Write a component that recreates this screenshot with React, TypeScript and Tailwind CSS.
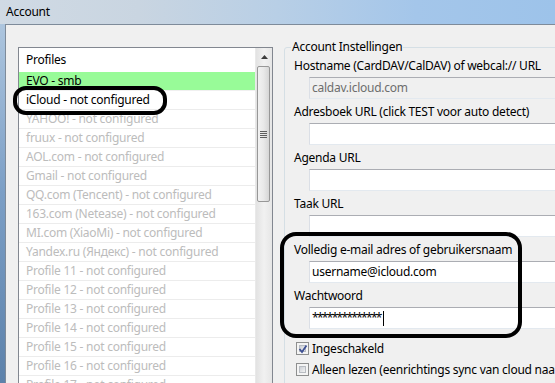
import React from "react";

const items: { t: string; c: "green" | "black" | "gray" }[] = [
  { t: "EVO - smb", c: "green" },
  { t: "iCloud - not configured", c: "black" },
  { t: "YAHOO! - not configured", c: "gray" },
  { t: "fruux - not configured", c: "gray" },
  { t: "AOL.com - not configured", c: "gray" },
  { t: "Gmail - not configured", c: "gray" },
  { t: "QQ.com (Tencent) - not configured", c: "gray" },
  { t: "163.com (Netease) - not configured", c: "gray" },
  { t: "MI.com (XiaoMi) - not configured", c: "gray" },
  { t: "Yandex.ru (Яндекс) - not configured", c: "gray" },
  { t: "Profile 11 - not configured", c: "gray" },
  { t: "Profile 12 - not configured", c: "gray" },
  { t: "Profile 13 - not configured", c: "gray" },
  { t: "Profile 14 - not configured", c: "gray" },
  { t: "Profile 15 - not configured", c: "gray" },
  { t: "Profile 16 - not configured", c: "gray" },
  { t: "Profile 17 - not configured", c: "gray" },
];

function Scrollbar() {
  return (
    <div className="w-[17px] shrink-0 flex flex-col bg-[linear-gradient(90deg,#e2e2e2,#f1f1f1_50%,#e6e6e6)] border-l border-[#e9e9e9]">
      <div className="h-[18px] flex items-center justify-center">
        <svg width="7" height="4" viewBox="0 0 7 4">
          <path d="M3.5 0 L7 4 L0 4 Z" fill="#3c3c3c" />
        </svg>
      </div>
      <div className="ml-[1px] mr-[2px] h-[136px] border border-[#979797] rounded-[2px] bg-[linear-gradient(90deg,#f2f2f2,#e9e9e9_50%,#d6d6d6)] flex flex-col items-center justify-center gap-[1px]">
        <div className="w-[7px] h-[1px] bg-[#5e5e5e]" />
        <div className="w-[7px] h-[1px] bg-[#5e5e5e]" />
        <div className="w-[7px] h-[1px] bg-[#5e5e5e]" />
        <div className="w-[7px] h-[1px] bg-[#5e5e5e]" />
      </div>
    </div>
  );
}

function Field({
  label,
  value,
  disabled,
  first,
  password,
}: {
  label: string;
  value?: string;
  disabled?: boolean;
  first?: boolean;
  password?: boolean;
}) {
  return (
    <>
      <div className={first ? "mt-[3px] h-[16px]" : "mt-[5px] h-[16px]"}>{label}</div>
      <div
        className={
          "mt-[3px] ml-[15px] w-[290px] h-[22px] border border-t-[#abadb3] border-l-[#dbdfe6] border-r-[#dbdfe6] border-b-[#e3e9ef] flex items-center pl-[2px] " +
          (disabled ? "bg-[#f0f0f0] text-[#6d6d6d]" : "bg-white text-black")
        }
      >
        {password ? (
          <>
            <span className="tracking-[-1.7px]">**************</span>
            <span className="ml-[2px] w-[1px] h-[15px] bg-black" />
          </>
        ) : (
          value
        )}
      </div>
    </>
  );
}

function CheckBox({ checked }: { checked?: boolean }) {
  return (
    <span className="relative ml-[2px] w-[13px] h-[13px] shrink-0 border border-[#8e8f8f] bg-[#f4f4f4] p-[2px] flex">
      <span className="flex-1 border border-[#b8bcc2] bg-[linear-gradient(135deg,#cbcfd5,#f3f3f3)]" />
      {checked && (
        <svg className="absolute left-[1px] top-[1px]" width="10" height="10" viewBox="0 0 10 10">
          <path d="M1.5 5 L4 8 L8.5 1.5" stroke="#3d4f93" strokeWidth="1.8" fill="none" />
        </svg>
      )}
    </span>
  );
}

export default function App() {
  return (
    <div className="relative w-[555px] h-[383px] overflow-hidden flex flex-col bg-[linear-gradient(180deg,#b4cbe2,#7c9fc6_50%,#5d82ab)] font-['Noto_Sans',sans-serif] text-[12px] leading-[16px] tracking-[-0.25px] text-black">
      <div className="h-[24px] shrink-0 flex items-center pl-[6px] bg-[linear-gradient(90deg,#d0dae4_0%,#c9d5e1_25%,#b8cfe6_50%,#a4c6ea_75%,#9dc3ea_100%)]">
        <span>Account</span>
      </div>
      <div className="flex-1 ml-[5px] border-l border-t border-[#7e8b9a] bg-[#f0f0f0] flex items-start pl-[12px] pt-[14px]">
        <div className="mt-[8px] w-[255px] h-[400px] shrink-0 border border-[#828790] bg-white flex">
          <div className="flex-1 flex flex-col">
            <div className="h-[24px] shrink-0 flex items-center pl-[7px]">Profiles</div>
            {items.map((it) => (
              <div
                key={it.t}
                className={
                  "h-[19px] shrink-0 flex items-center pl-[7px] whitespace-nowrap border-b " +
                  (it.c === "green"
                    ? "bg-[#98fb98] border-[#f0f0f0] text-black"
                    : it.c === "black"
                    ? "border-[#ececec] text-black"
                    : "border-[#ececec] text-[#bcbcbc]")
                }
              >
                {it.t}
              </div>
            ))}
          </div>
          <Scrollbar />
        </div>
        <fieldset className="ml-[11px] w-[300px] h-[400px] shrink-0 border border-[#d5dfe5] rounded-[3px] p-0">
          <legend className="ml-[6px] px-[1px] leading-[16px]">Account Instellingen</legend>
          <div className="pl-[9px] flex flex-col">
            <Field first label="Hostname (CardDAV/CalDAV) of webcal:// URL" value="caldav.icloud.com" disabled />
            <Field label="Adresboek URL (click TEST voor auto detect)" />
            <Field label="Agenda URL" />
            <Field label="Taak URL" />
            <Field label="Volledig e-mail adres of gebruikersnaam" value="username@icloud.com" />
            <Field label="Wachtwoord" password />
            <div className="mt-[9px] h-[21px] flex items-center gap-[3px] whitespace-nowrap">
              <CheckBox checked />
              <span>Ingeschakeld</span>
            </div>
            <div className="h-[21px] flex items-center gap-[3px] whitespace-nowrap">
              <CheckBox />
              <span>Alleen lezen (eenrichtings sync van cloud naar Outlook)</span>
            </div>
            <div className="h-[21px] flex items-center gap-[3px] whitespace-nowrap">
              <CheckBox />
              <span>Alleen uitschakelen</span>
            </div>
          </div>
        </fieldset>
      </div>
      <div className="absolute left-[13px] top-[86px] w-[154px] h-[29px] border-[4px] border-black rounded-[13px]" />
      <div className="absolute left-[280px] top-[232px] w-[242px] h-[106px] border-[4px] border-black rounded-[16px]" />
    </div>
  );
}
